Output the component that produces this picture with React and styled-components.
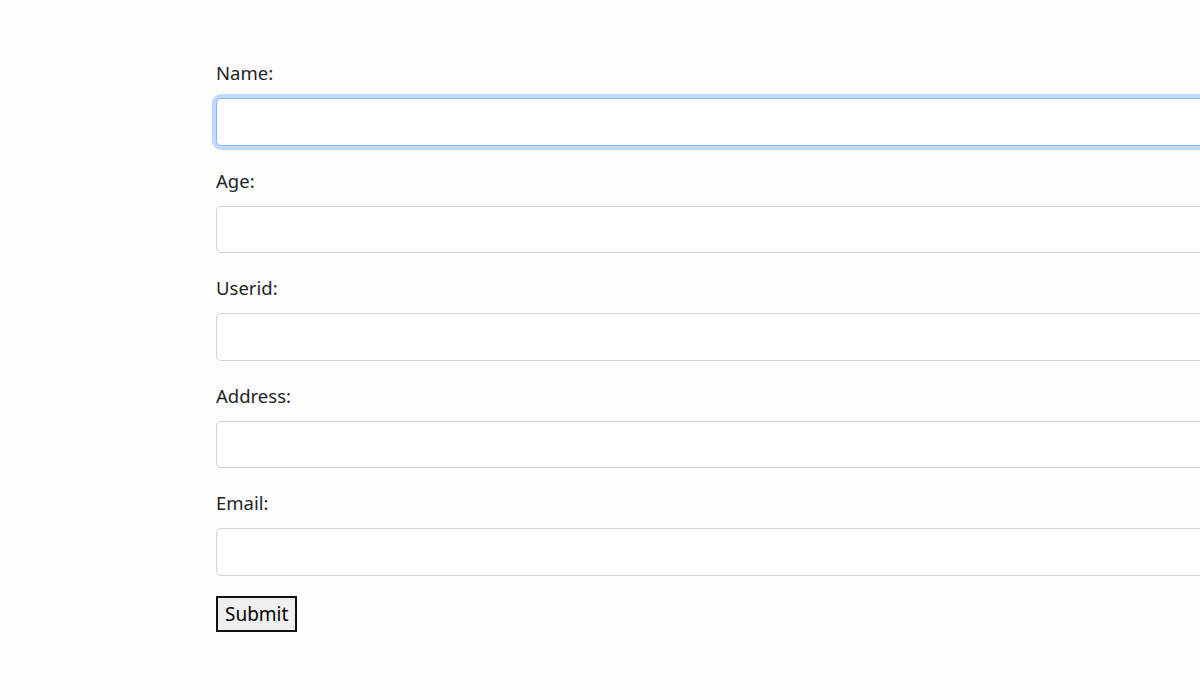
import React from 'react';
import styled, { createGlobalStyle } from 'styled-components';

const GlobalStyle = createGlobalStyle`
  html, body {
    margin: 0;
    padding: 0;
    overflow: hidden;
    background: #fdfdfc;
  }
  body {
    font-family: "Noto Sans", "Open Sans", sans-serif;
    color: #212529;
  }
`;

// the form runs on past the right side of the window, as in the screenshot
const Page = styled.div`
  width: 100vw;
  height: 100vh;
  overflow: hidden;
  box-sizing: border-box;
  padding: 58px 0 0 216px;
`;

const Form = styled.form`
  display: flex;
  flex-direction: column;
  width: 1200px;
`;

const Group = styled.div`
  display: flex;
  flex-direction: column;
  margin-bottom: 20px;
`;

const Label = styled.label`
  font-size: 18.5px;
  line-height: 30px;
  margin-bottom: 10px;
`;

const Input = styled.input`
  box-sizing: border-box;
  height: 47.5px;
  width: 100%;
  padding: 8px 15px;
  font-size: 20px;
  font-family: inherit;
  background: #fff;
  border: 1px solid ${p => (p.$focus ? '#86b7fe' : '#ced4da')};
  border-radius: 5px;
  box-shadow: ${p => (p.$focus ? '0 0 0 4px rgba(13, 110, 253, 0.25)' : 'none')};
  outline: none;
`;

const SubmitButton = styled.button`
  align-self: flex-start;
  height: 36px;
  padding: 0 7px;
  font-family: inherit;
  font-size: 19px;
  color: #000;
  background: #efefef;
  border: 2px solid #111;
  border-radius: 0;
`;

const fields = ['Name', 'Age', 'Userid', 'Address', 'Email'];

export default function App() {
  return (
    <Page>
      <GlobalStyle />
      <Form onSubmit={e => e.preventDefault()}>
        {fields.map((f, i) => (
          <Group key={f}>
            <Label htmlFor={f.toLowerCase()}>{f}:</Label>
            <Input id={f.toLowerCase()} type="text" $focus={i === 0} />
          </Group>
        ))}
        <SubmitButton type="submit">Submit</SubmitButton>
      </Form>
    </Page>
  );
}
